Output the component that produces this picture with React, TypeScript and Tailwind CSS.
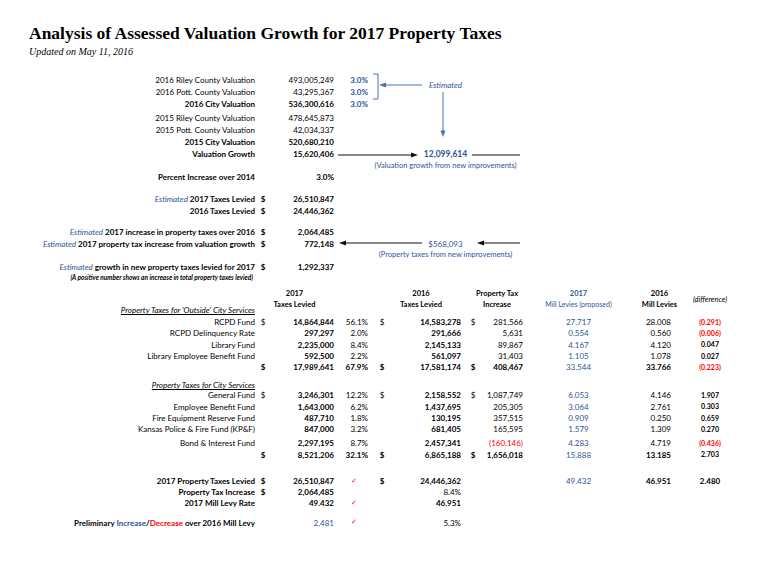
import type { ReactNode } from 'react';

// column grid shared by every row: label | $ | 2017 | % | $ | 2016 | $ | increase | mill 17 | mill 16 | diff
const cols = 'grid grid-cols-[255px_16px_63px_34px_28px_65px_24px_38px_111px_37px_78px] items-center';

const blue = 'text-[#2f5597]';
const millBlue = 'text-[#2f5597]';
const red = 'text-[#ff0000]';

function Row({ className = '', children }: { className?: string; children: ReactNode }) {
    return <div className={`${cols} ${className}`}>{children}</div>;
}

const L = ({ children, className = '' }: { children: ReactNode; className?: string }) => (
    <div className={`col-start-1 text-right whitespace-nowrap ${className}`}>{children}</div>
);
const D = ({ col = 'col-start-2', bold = false }: { col?: string; bold?: boolean }) => (
    <div className={`${col} text-center ${bold ? 'font-bold' : ''}`}>$</div>
);
const Check = () => (
    <div className={`col-start-4 pl-[17px] text-left font-['DejaVu_Sans',sans-serif] text-[7px] ${red}`}>✓</div>
);
const Est = () => <span className={`${blue} italic font-normal`}>Estimated</span>;

function Arrows() {
    return (
        <svg className="absolute inset-0 pointer-events-none" width="776" height="567" viewBox="0 0 776 567">
            {/* blue estimate bracket + arrows */}
            <path d="M373 74 H378 V99 H373" fill="none" stroke="#4a72b0" strokeWidth="1" />
            <line x1="422" y1="85" x2="384" y2="85" stroke="#4a72b0" strokeWidth="1" />
            <polygon points="379,85 386,82.5 386,87.5" fill="#4a72b0" />
            <line x1="443" y1="92" x2="443" y2="132" stroke="#4a72b0" strokeWidth="1" />
            <polygon points="443,137 440.5,130.5 445.5,130.5" fill="#4a72b0" />
            {/* black flow arrows */}
            <line x1="338" y1="155" x2="412" y2="155" stroke="#111" strokeWidth="1" />
            <polygon points="418,155 411,152.5 411,157.5" fill="#111" />
            <line x1="472" y1="155" x2="520" y2="155" stroke="#111" strokeWidth="1" />
            <line x1="422" y1="243" x2="345" y2="243" stroke="#111" strokeWidth="1" />
            <polygon points="339,243 346,240.5 346,245.5" fill="#111" />
            <line x1="520" y1="243" x2="483" y2="243" stroke="#111" strokeWidth="1" />
            <polygon points="477,243 484,240.5 484,245.5" fill="#111" />
        </svg>
    );
}

export default function App() {
    return (
        <div className="relative w-[776px] h-[567px] overflow-hidden bg-white text-black font-['Lato',sans-serif] text-[8px]">
            <Arrows />

            <div className="pl-[29px] font-['Liberation_Serif',serif]">
                <h1 className="mt-[24px] h-[18px] leading-[18px] text-[17.5px] font-bold whitespace-nowrap">
                    Analysis of Assessed Valuation Growth for 2017 Property Taxes
                </h1>
                <div className="mt-[4px] h-[12px] leading-[12px] text-[10px] italic">Updated on May 11, 2016</div>
            </div>

            {/* valuation block */}
            <Row className="mt-[16px] h-[12px]">
                <L>2016 Riley County Valuation</L>
                <div className="col-start-3 text-right">493,005,249</div>
                <div className={`col-start-4 text-right font-bold ${blue}`}>3.0%</div>
            </Row>
            <Row className="h-[12px]">
                <L>2016 Pott. County Valuation</L>
                <div className="col-start-3 text-right">43,295,367</div>
                <div className={`col-start-4 text-right font-bold ${blue}`}>3.0%</div>
                <div className={`col-start-5 col-span-4 text-center italic ${blue} -translate-y-[7px]`}>Estimated</div>
            </Row>
            <Row className="h-[12px] font-bold">
                <L>2016 City Valuation</L>
                <div className="col-start-3 text-right">536,300,616</div>
                <div className={`col-start-4 text-right ${blue}`}>3.0%</div>
            </Row>
            <Row className="mt-[2px] h-[12px]">
                <L>2015 Riley County Valuation</L>
                <div className="col-start-3 text-right">478,645,873</div>
            </Row>
            <Row className="h-[12px]">
                <L>2015 Pott. County Valuation</L>
                <div className="col-start-3 text-right">42,034,337</div>
            </Row>
            <Row className="h-[12px] font-bold">
                <L>2015 City Valuation</L>
                <div className="col-start-3 text-right">520,680,210</div>
            </Row>
            <Row className="h-[12px] font-bold">
                <L>Valuation Growth</L>
                <div className="col-start-3 text-right">15,620,406</div>
                <div className={`col-start-5 col-span-4 text-center text-[8.5px] ${millBlue}`}>12,099,614</div>
            </Row>
            <Row className="h-[10px]">
                <div className={`col-start-5 col-span-4 text-center text-[7.5px] whitespace-nowrap ${blue}`}>
                    (Valuation growth from new improvements)
                </div>
            </Row>

            <Row className="mt-[1px] h-[12px] font-bold">
                <L>Percent Increase over 2014</L>
                <div className="col-start-3 text-right">3.0%</div>
            </Row>

            <Row className="mt-[10px] h-[12px] font-bold">
                <L><Est /> 2017 Taxes Levied</L>
                <D bold />
                <div className="col-start-3 text-right">26,510,847</div>
            </Row>
            <Row className="h-[12px] font-bold">
                <L>2016 Taxes Levied</L>
                <D bold />
                <div className="col-start-3 text-right">24,446,362</div>
            </Row>

            <Row className="mt-[9px] h-[12px] font-bold">
                <L><Est />  2017 increase in property taxes over 2016</L>
                <D bold />
                <div className="col-start-3 text-right">2,064,485</div>
            </Row>
            <Row className="h-[11px] font-bold">
                <L><Est />  2017 property tax increase from valuation growth</L>
                <D bold />
                <div className="col-start-3 text-right">772,148</div>
                <div className={`col-start-5 col-span-4 text-center font-normal ${millBlue}`}>$568,093</div>
            </Row>
            <Row className="h-[9px]">
                <div className={`col-start-5 col-span-4 text-center text-[7.5px] whitespace-nowrap ${blue}`}>
                    (Property taxes from new improvements)
                </div>
            </Row>

            <Row className="mt-[3px] h-[12px] font-bold">
                <L><Est /> growth in new property taxes levied for 2017</L>
                <D bold />
                <div className="col-start-3 text-right">1,292,337</div>
            </Row>
            <Row className="h-[9px]">
                <L className="pr-[2px] text-[6.5px] italic font-bold">
                    (A positive number shows an increase in total property taxes levied)
                </L>
            </Row>

            {/* table header */}
            <div className={`${cols} mt-[6px] h-[28px] !items-start text-[7.5px] font-bold leading-[11px]`}>
                <div className="col-start-1 self-end text-right leading-[12px] text-[8px] font-normal italic underline whitespace-nowrap">
                    Property Taxes for 'Outside' City Services
                </div>
                <div className="col-start-2 col-span-2 text-center">
                    <div>2017</div>
                    <div>Taxes Levied</div>
                </div>
                <div className="col-start-5 col-span-2 pl-[13px] text-center">
                    <div>2016</div>
                    <div>Taxes Levied</div>
                </div>
                <div className="col-start-7 col-span-2 pl-[10px] text-center whitespace-nowrap">
                    <div>Property Tax</div>
                    <div>Increase</div>
                </div>
                <div className={`col-start-9 text-center whitespace-nowrap ${millBlue}`}>
                    <div>2017</div>
                    <div className="font-normal text-[7px]">Mill Levies (proposed)</div>
                </div>
                <div className="col-start-10 -mr-[14px] text-center whitespace-nowrap">
                    <div>2016</div>
                    <div>Mill Levies</div>
                </div>
                <div className="col-start-11 mt-[6px] text-center font-normal italic">(difference)</div>
            </div>

            {/* outside city services */}
            <FundRow label="RCPD Fund" d1 v17="14,864,844" pct="56.1%" d2 v16="14,583,278" d3 inc="281,566" m17="27.717" m16="28.008" diff="(0.291)" neg />
            <FundRow label="RCPD Delinquency Rate" v17="297,297" pct="2.0%" v16="291,666" inc="5,631" m17="0.554" m16="0.560" diff="(0.006)" neg />
            <FundRow label="Library Fund" v17="2,235,000" pct="8.4%" v16="2,145,133" inc="89,867" m17="4.167" m16="4.120" diff="0.047" />
            <FundRow label="Library Employee Benefit Fund" v17="592,500" pct="2.2%" v16="561,097" inc="31,403" m17="1.105" m16="1.078" diff="0.027" />
            <FundRow label="" d1 v17="17,989,641" pct="67.9%" d2 v16="17,581,174" d3 inc="408,467" m17="33.544" m16="33.766" diff="(0.223)" neg total />

            {/* city services */}
            <div className={`${cols} mt-[7px] h-[10px]`}>
                <div className="col-start-1 text-right italic underline whitespace-nowrap">Property Taxes for City Services</div>
            </div>
            <FundRow label="General Fund" d1 v17="3,246,301" pct="12.2%" d2 v16="2,158,552" d3 inc="1,087,749" m17="6.053" m16="4.146" diff="1.907" />
            <FundRow label="Employee Benefit Fund" v17="1,643,000" pct="6.2%" v16="1,437,695" inc="205,305" m17="3.064" m16="2.761" diff="0.303" />
            <FundRow label="Fire Equipment Reserve Fund" v17="487,710" pct="1.8%" v16="130,195" inc="357,515" m17="0.909" m16="0.250" diff="0.659" />
            <FundRow label="Kansas Police & Fire Fund (KP&F)" v17="847,000" pct="3.2%" v16="681,405" inc="165,595" m17="1.579" m16="1.309" diff="0.270" />
            <FundRow label="Bond & Interest Fund" v17="2,297,195" pct="8.7%" v16="2,457,341" inc="(160,146)" incNeg m17="4.283" m16="4.719" diff="(0.436)" neg gap />
            <FundRow label="" d1 v17="8,521,206" pct="32.1%" d2 v16="6,865,188" d3 inc="1,656,018" m17="15.888" m16="13.185" diff="2.703" total />

            {/* summary */}
            <Row className="mt-[15px] h-[11.25px] font-bold">
                <L>2017 Property Taxes Levied</L>
                <D bold />
                <div className="col-start-3 text-right">26,510,847</div>
                <Check />
                <D col="col-start-5" bold />
                <div className="col-start-6 text-right">24,446,362</div>
                <div className={`col-start-9 text-center font-normal ${millBlue}`}>49.432</div>
                <div className="col-start-10 text-right">46.951</div>
                <div className="col-start-11 text-center">2.480</div>
            </Row>
            <Row className="h-[11.25px] font-bold">
                <L>Property Tax Increase</L>
                <D bold />
                <div className="col-start-3 text-right">2,064,485</div>
                <div className="col-start-6 text-right font-normal">8.4%</div>
            </Row>
            <Row className="h-[11.25px] font-bold">
                <L>2017 Mill Levy Rate</L>
                <div className="col-start-3 text-right">49.432</div>
                <Check />
                <div className="col-start-6 text-right">46.951</div>
            </Row>
            <Row className="mt-[8px] h-[11.25px] font-bold">
                <L>
                    Preliminary <span className={blue}>Increase</span>/<span className={red}>Decrease</span> over 2016 Mill Levy
                </L>
                <div className={`col-start-3 text-right font-normal ${millBlue}`}>2.481</div>
                <Check />
                <div className="col-start-6 text-right font-normal">5.3%</div>
            </Row>
        </div>
    );
}

type FundProps = {
    label: string;
    d1?: boolean;
    d2?: boolean;
    d3?: boolean;
    v17: string;
    pct: string;
    v16: string;
    inc: string;
    incNeg?: boolean;
    m17: string;
    m16: string;
    diff: string;
    neg?: boolean;
    total?: boolean;
    gap?: boolean;
};

function FundRow({ label, d1, d2, d3, v17, pct, v16, inc, incNeg, m17, m16, diff, neg, total, gap }: FundProps) {
    return (
        <Row className={`h-[11.25px] ${gap ? 'mt-[3px]' : ''} ${total ? 'font-bold' : ''}`}>
            <L>{label}</L>
            {d1 && <D />}
            <div className="col-start-3 text-right font-bold">{v17}</div>
            <div className="col-start-4 text-right">{pct}</div>
            {d2 && <D col="col-start-5" />}
            <div className="col-start-6 text-right font-bold">{v16}</div>
            {d3 && <D col="col-start-7" />}
            <div className={`col-start-8 text-right ${incNeg ? red : ''}`}>{inc}</div>
            <div className={`col-start-9 text-center ${millBlue} ${total ? 'font-normal' : ''}`}>{m17}</div>
            <div className="col-start-10 text-right">{m16}</div>
            <div className={`col-start-11 text-center text-[7px] font-bold ${neg ? red : ''}`}>{diff}</div>
        </Row>
    );
}
